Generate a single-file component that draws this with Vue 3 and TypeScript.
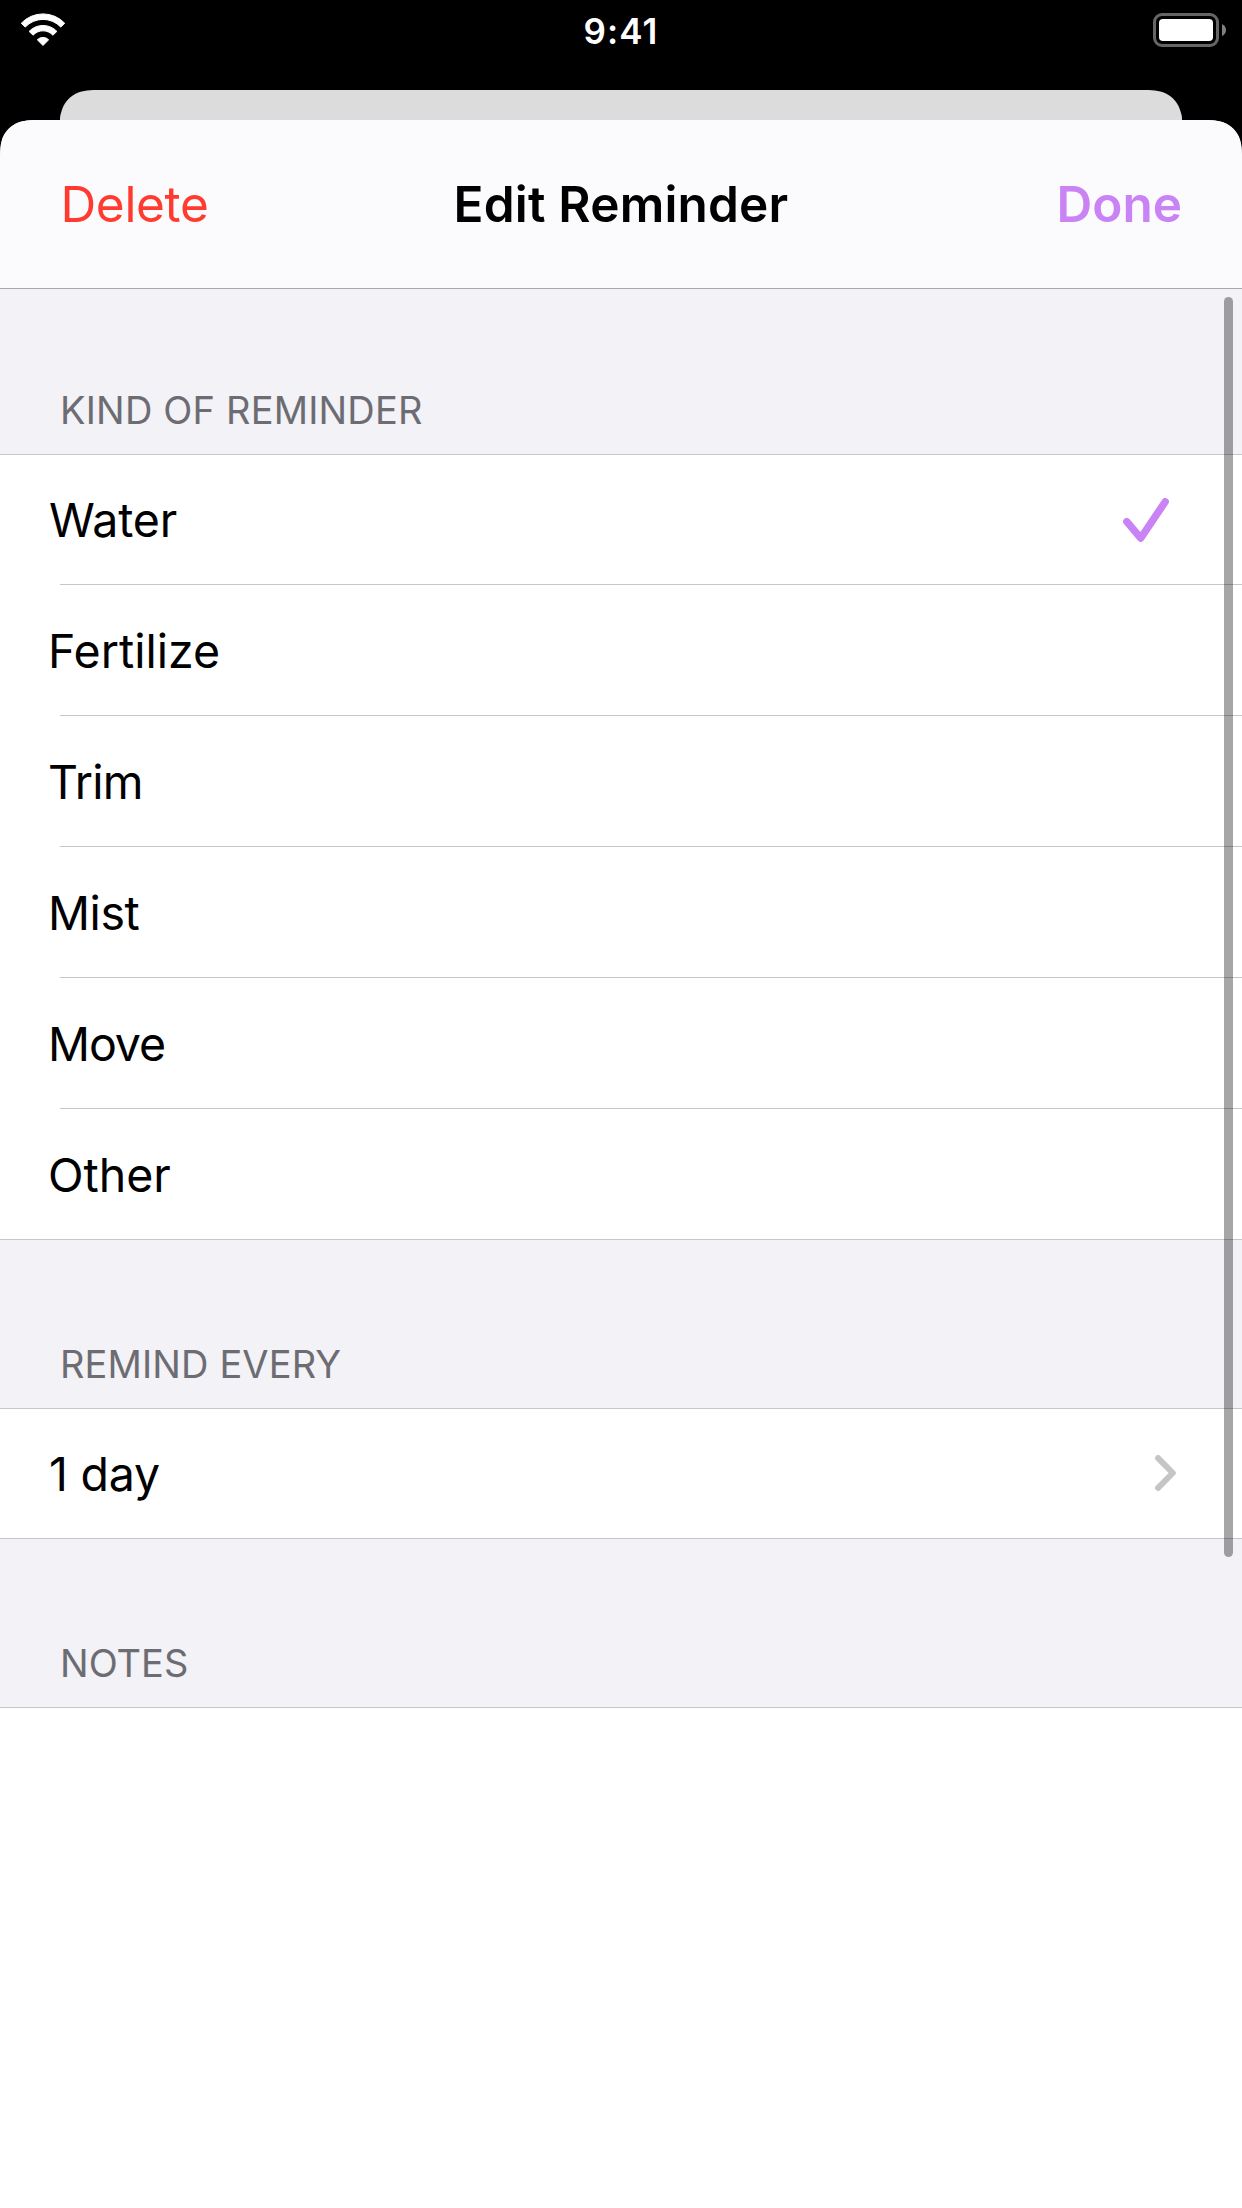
<script setup lang="ts">
import { ref } from 'vue'

const kinds: string[] = ['Water', 'Fertilize', 'Trim', 'Mist', 'Move', 'Other']
const selected = ref<string>('Water')
const interval = ref<string>('1 day')
</script>

<template>
  <div class="screen">
    <header class="status">
      <svg class="wifi" width="46" height="34" viewBox="0 0 46 34">
        <g fill="#fff" stroke="#fff" stroke-width="1" stroke-linejoin="round">
          <path d="M1.3 10.2A30 30 0 0 1 44.7 10.2L40.8 14.1A24.4 24.4 0 0 0 5.2 14.1Z" />
          <path d="M9.1 18.4A19.2 19.2 0 0 1 36.9 18.4L32.9 22.2A13.4 13.4 0 0 0 13.1 22.2Z" />
          <path d="M17.3 26.8A8 8 0 0 1 28.7 26.8L23 32.4Z" />
        </g>
      </svg>
      <span class="time">9:41</span>
      <svg class="battery" width="73" height="34" viewBox="0 0 73 34">
        <rect x="1.5" y="1.5" width="63" height="31" rx="7.5" fill="none" stroke="#666" stroke-width="3" />
        <rect x="6" y="6" width="54" height="22" rx="4" fill="#fff" />
        <path d="M69 11Q73 13 73 17Q73 21 69 23Z" fill="#808080" />
      </svg>
    </header>
    <div class="behind"></div>
    <main class="sheet">
      <nav class="bar">
        <span class="delete">Delete</span>
        <span class="title">Edit Reminder</span>
        <span class="done">Done</span>
      </nav>
      <h2 class="label first">KIND OF REMINDER</h2>
      <ul class="group">
        <li v-for="kind in kinds" :key="kind" class="row" @click="selected = kind">
          <span :class="['text', kind.toLowerCase()]">{{ kind }}</span>
          <svg v-if="kind === selected" class="check" width="46" height="44" viewBox="0 0 46 44">
            <path d="M3.8 23.6L17.7 40.1L42.2 3.8" fill="none" stroke="#c983f4" stroke-width="7.4" stroke-linecap="round" stroke-linejoin="round" />
          </svg>
        </li>
      </ul>
      <h2 class="label every">REMIND EVERY</h2>
      <ul class="group">
        <li class="row">
          <span class="text day">{{ interval }}</span>
          <svg class="chevron" width="21" height="36" viewBox="0 0 21 36">
            <path d="M3.1 3.1L17.8 18L3.1 32.9" fill="none" stroke="#c5c5c7" stroke-width="6" stroke-linecap="round" stroke-linejoin="round" />
          </svg>
        </li>
      </ul>
      <h2 class="label">NOTES</h2>
      <section class="editor"></section>
      <div class="scrollbar"></div>
    </main>
  </div>
</template>

<style>
body {
  margin: 0;
  background: #000;
}
</style>

<style scoped>
.screen {
  width: 1242px;
  height: 2208px;
  display: flex;
  flex-direction: column;
  overflow: hidden;
  background: #000;
  color: #000;
  font-family: Inter, "Liberation Sans", sans-serif;
}
.status {
  box-sizing: border-box;
  height: 90px;
  display: grid;
  grid-template-columns: 1fr auto 1fr;
  align-items: start;
  padding: 13px 16px 0 20px;
  color: #fff;
}
.time {
  margin-right: 4px;
  font-size: 35px;
  line-height: 36px;
  font-weight: 600;
  letter-spacing: 1.1px;
}
.battery {
  justify-self: end;
}
.behind {
  flex: none;
  height: 30px;
  margin: 0 60px;
  background: #dcdcdd;
  clip-path: path("M0 30C0 26.05 0 26.05 2.25 18.94C5.07 11.18 11.18 5.07 18.94 2.25C26.05 0 32.65 0 45.86 0H1076.14C1089.35 0 1095.95 0 1103.06 2.25C1110.82 5.07 1116.93 11.18 1119.75 18.94C1122 26.05 1122 26.05 1122 30Z");
}
.sheet {
  position: relative;
  flex: 1;
  display: flex;
  flex-direction: column;
  background: #f2f2f7;
  clip-path: path("M0 2088V45.86C0 32.65 0 26.05 2.25 18.94C5.07 11.18 11.18 5.07 18.94 2.25C26.05 0 32.65 0 45.86 0H1196.14C1209.35 0 1215.95 0 1223.06 2.25C1230.82 5.07 1236.93 11.18 1239.75 18.94C1242 26.05 1242 32.65 1242 45.86V2088Z");
}
.bar {
  box-sizing: border-box;
  flex: none;
  height: 169px;
  display: grid;
  grid-template-columns: 1fr auto 1fr;
  padding: 54px 60px 0;
  border-bottom: 1px solid #a8a8ad;
  background: #fbfbfd;
  font-size: 49.5px;
  line-height: 60px;
}
.delete {
  margin-left: 0.5px;
  color: #ff3b30;
  letter-spacing: -0.35px;
}
.title,
.done {
  font-weight: 600;
}
.title {
  letter-spacing: 0.2px;
}
.done {
  justify-self: end;
  color: #c983f4;
}
.label {
  box-sizing: border-box;
  flex: none;
  height: 168px;
  margin: 0;
  padding: 101px 60px 0;
  color: #6d6c72;
  font-size: 38px;
  line-height: 46px;
  font-weight: 400;
}
.label.first {
  height: 165px;
  padding-top: 98px;
  letter-spacing: 0.17px;
}
.label.every {
  letter-spacing: 0.12px;
}
.group {
  flex: none;
  margin: 0;
  padding: 0;
  list-style: none;
  background: #fff;
  border-top: 1px solid #c6c6c8;
  border-bottom: 1px solid #c6c6c8;
}
.row {
  box-sizing: border-box;
  display: flex;
  align-items: center;
  justify-content: space-between;
  height: 131px;
  padding: 2px 66px 0 48px;
  font-size: 46.5px;
  line-height: 56px;
  background: linear-gradient(#c6c6c8, #c6c6c8) 60px 0 / 1182px 1px no-repeat;
}
.row:first-child {
  height: 129px;
  padding-top: 0;
  background: none;
}
.water {
  margin-left: 1px;
  letter-spacing: -0.2px;
}
.trim {
  letter-spacing: -0.7px;
}
.mist {
  letter-spacing: -0.4px;
}
.move {
  letter-spacing: -1.1px;
}
.day {
  margin-left: 1px;
  letter-spacing: -0.2px;
}
.check {
  margin-right: 7px;
}
.chevron {
  margin-top: -1px;
}
.editor {
  flex: 1;
  background: #fff;
  border-top: 1px solid #c6c6c8;
}
.scrollbar {
  position: absolute;
  top: 177px;
  right: 9px;
  width: 9px;
  height: 1260px;
  border-radius: 4.5px;
  background: rgba(0, 0, 0, 0.35);
}
</style>
